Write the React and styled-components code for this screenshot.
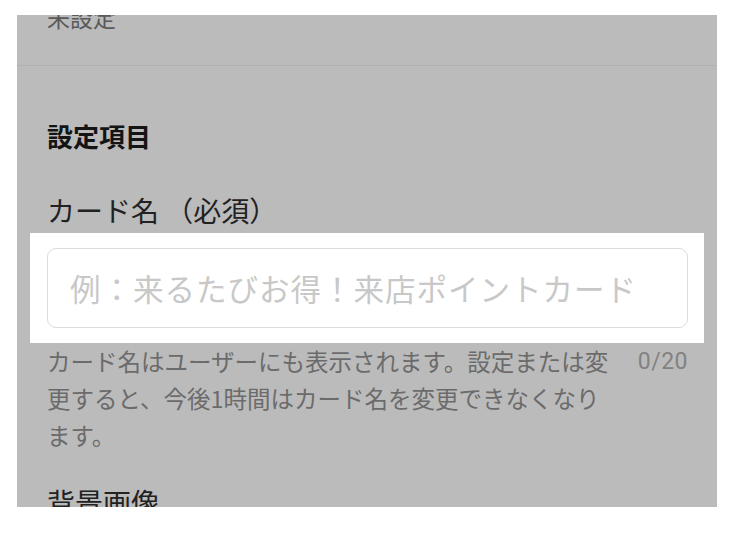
import React from "react";
import styled, { createGlobalStyle } from "styled-components";

const Global = createGlobalStyle`
  html, body { margin: 0; padding: 0; background: #ffffff; }
  body { font-family: "Noto Sans CJK JP", "Noto Sans", sans-serif; }
  * { box-sizing: border-box; }
`;

const Page = styled.div`
  padding: 15px 17px 0 17px;
  width: 734px;
  height: 536px;
`;

const Panel = styled.div`
  width: 700px;
  height: 492px;
  overflow: hidden;
  background: #bbbbbb;
`;

const TopSection = styled.div`
  margin-top: -14px;
  padding: 0 29px 32px 30px;
  border-bottom: 1px solid #b1b1b1;
`;

const Value = styled.div`
  font-size: 23px;
  line-height: 32px;
  color: #5a5a5a;
`;

const Content = styled.div`
  display: flex;
  flex-direction: column;
  padding: 52px 29px 0 30px;
`;

const SectionTitle = styled.h2`
  margin: 0;
  font-size: 26px;
  line-height: 36px;
  font-weight: 700;
  color: #141414;
`;

const FieldLabel = styled.div`
  margin-top: ${(p) => p.$gap}px;
  font-size: 28px;
  line-height: 38px;
  color: #222222;
  white-space: pre;
`;

const Spotlight = styled.div`
  margin: 4px -16px 0 -17px;
  padding: 15px 16px 15px 17px;
  background: #ffffff;
`;

const TextInput = styled.input`
  display: block;
  width: 100%;
  height: 80px;
  padding: 0 22px;
  border: 1.5px solid #dcdcdc;
  border-radius: 9px;
  background: #ffffff;
  font-family: "Noto Sans CJK JP", sans-serif;
  font-size: 30.5px;
  letter-spacing: 1px;
  color: #222;
  outline: none;
  &::placeholder {
    color: #c8c8c8;
  }
`;

const HelpRow = styled.div`
  display: flex;
  align-items: flex-start;
  justify-content: space-between;
`;

const HelpText = styled.p`
  margin: 0;
  width: 570px;
  font-size: 23.5px;
  line-height: 37px;
  color: #6b6b6b;
`;

const Counter = styled.span`
  font-family: Roboto, "Noto Sans", sans-serif;
  font-size: 23px;
  letter-spacing: 0.5px;
  line-height: 37px;
  color: #828282;
`;

export default function App() {
  return (
    <>
      <Global />
      <Page>
        <Panel>
          <TopSection>
            <Value>未設定</Value>
          </TopSection>
          <Content>
            <SectionTitle>設定項目</SectionTitle>
            <FieldLabel $gap={37}>{"カード名 （必須）"}</FieldLabel>
            <Spotlight>
              <TextInput placeholder="例：来るたびお得！来店ポイントカード" />
            </Spotlight>
            <HelpRow>
              <HelpText>
                カード名はユーザーにも表示されます。設定または変更すると、今後1時間はカード名を変更できなくなります。
              </HelpText>
              <Counter>0/20</Counter>
            </HelpRow>
            <FieldLabel $gap={29}>背景画像</FieldLabel>
          </Content>
        </Panel>
      </Page>
    </>
  );
}
